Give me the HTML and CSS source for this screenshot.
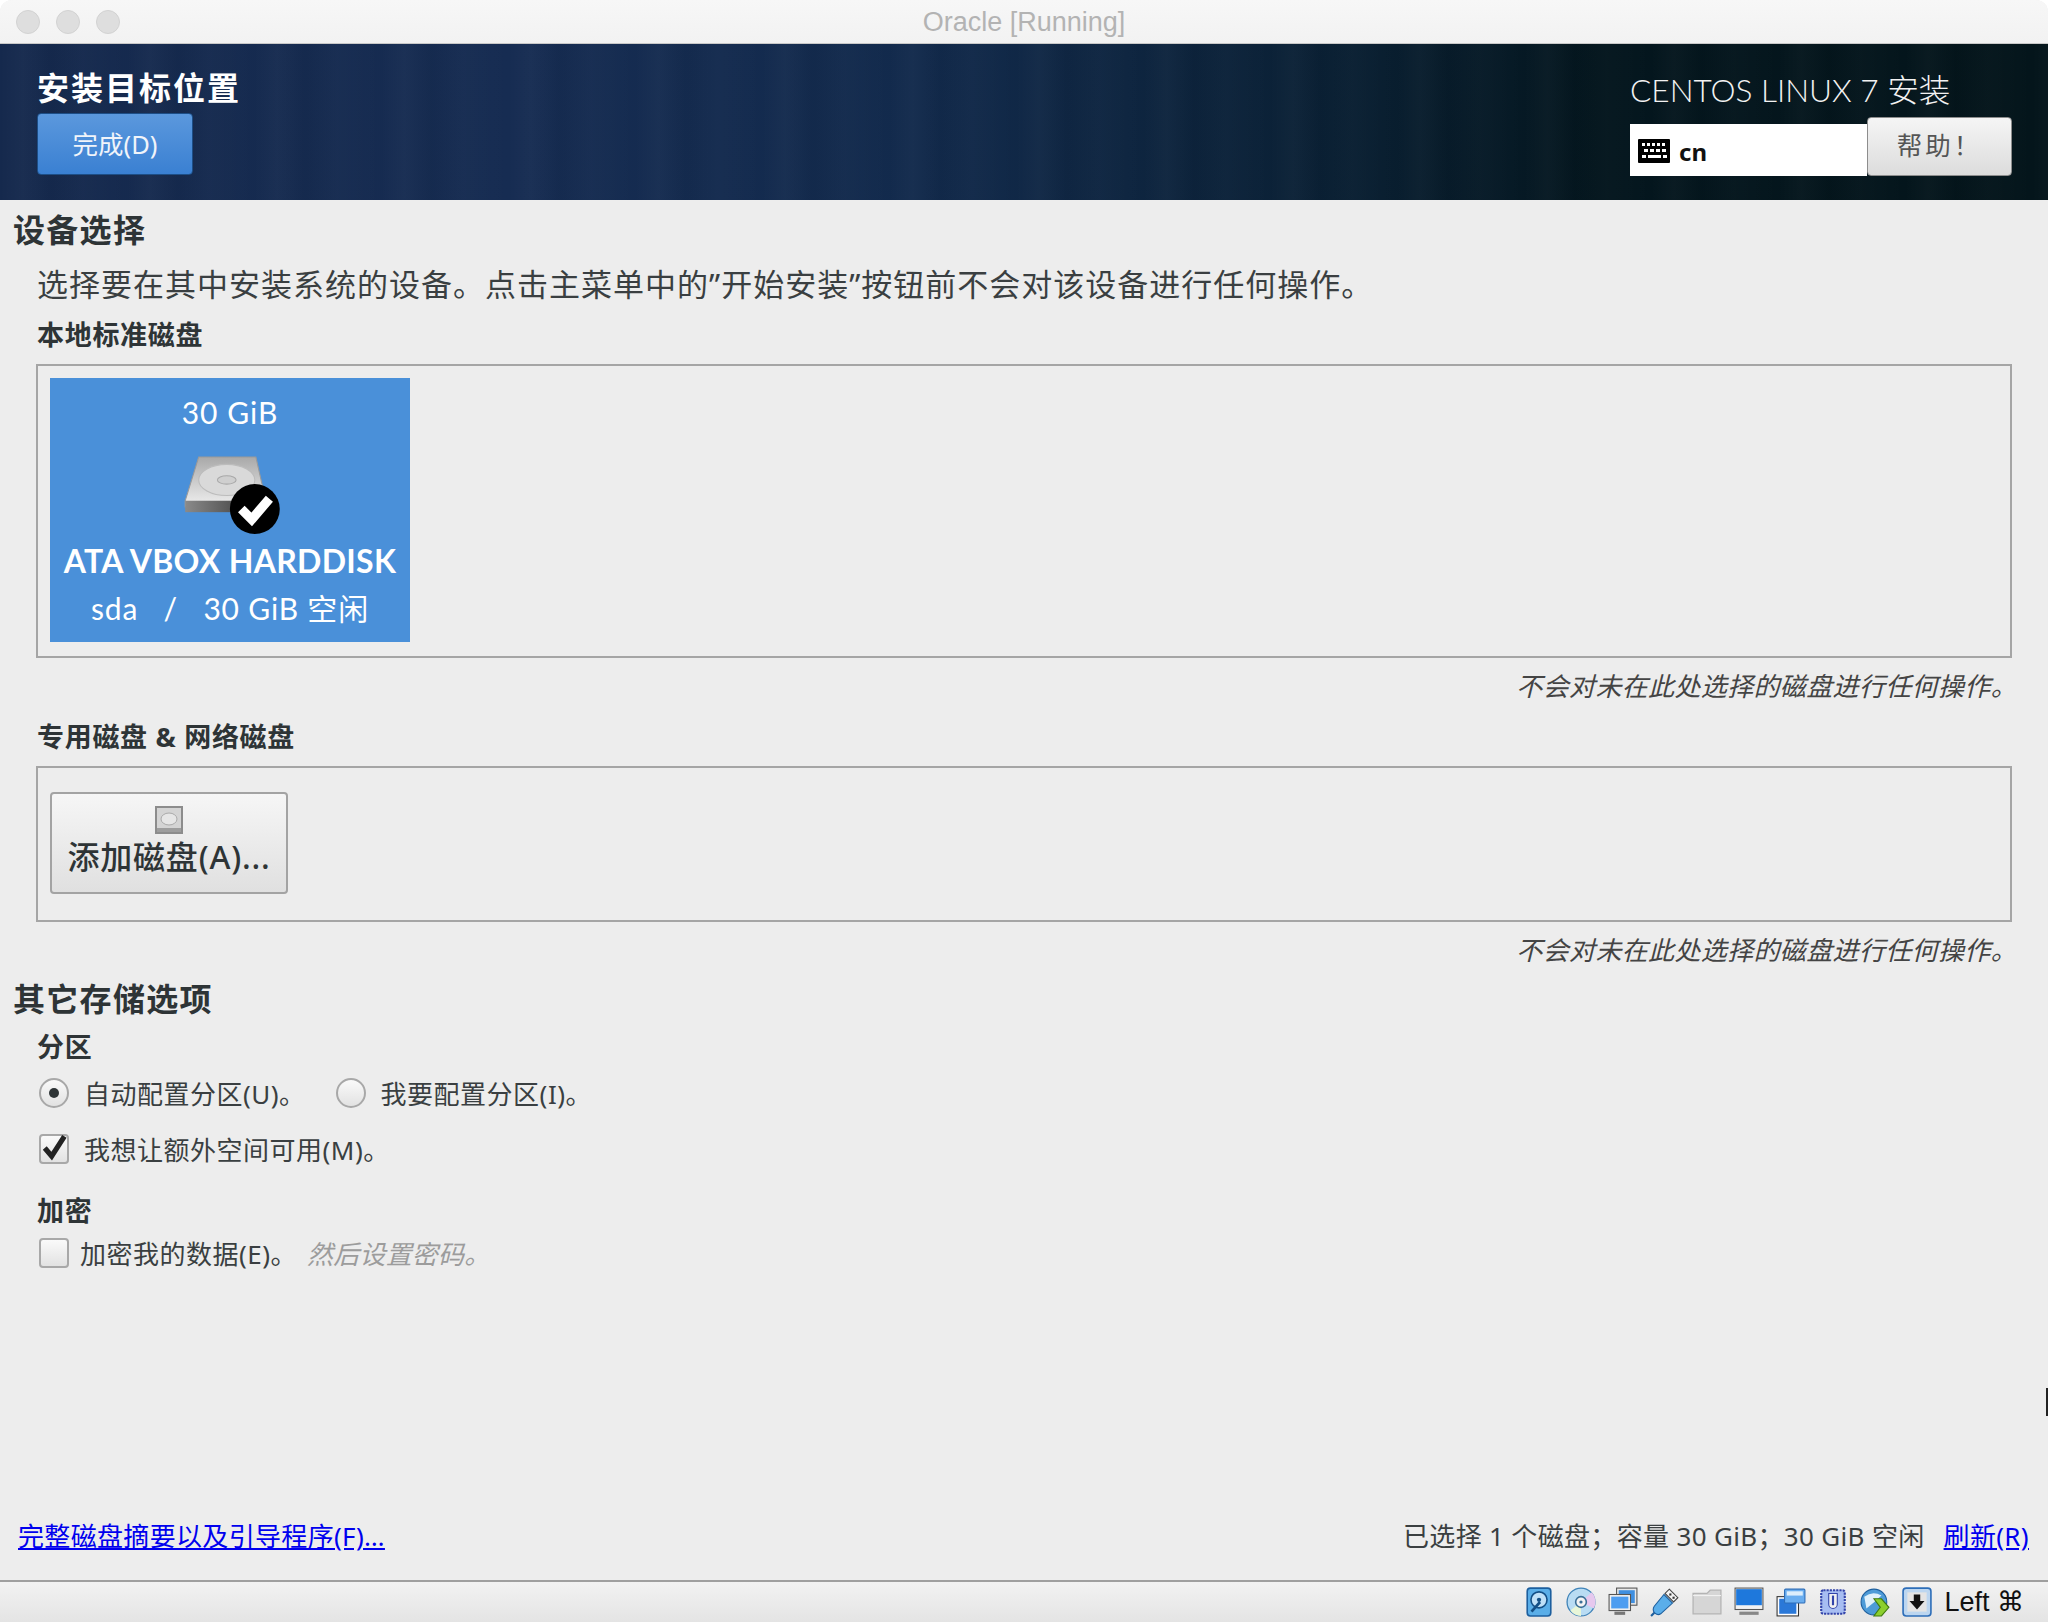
FILE: index.html
```html
<!DOCTYPE html>
<html lang="zh-CN">
<head>
<meta charset="utf-8">
<title>Oracle [Running]</title>
<link rel="stylesheet" href="styles.css">
</head>
<body>
<div class="window">
  <div class="titlebar">
    <div class="lights"><i></i><i></i><i></i></div>
    <div class="wintitle">Oracle [Running]</div>
  </div>
  <header class="banner">
    <div class="banner-left">
      <h1>安装目标位置</h1>
      <button class="done">完成(D)</button>
    </div>
    <div class="banner-right">
      <div class="product">CENTOS LINUX 7 安装</div>
      <div class="kb-row">
        <div class="kb">
          <svg class="kb-icon" viewBox="0 0 32 24"><rect width="32" height="24" rx="1" fill="#000"/><g fill="#fff"><rect x="4" y="4" width="3" height="3"/><rect x="9" y="4" width="3" height="3"/><rect x="14" y="4" width="3" height="3"/><rect x="19" y="4" width="3" height="3"/><rect x="24" y="4" width="3" height="3"/><rect x="6" y="10" width="4" height="3"/><rect x="12" y="10" width="4" height="3"/><rect x="18" y="10" width="4" height="3"/><rect x="24" y="10" width="4" height="3"/><rect x="4" y="16" width="4" height="3"/><rect x="10" y="16" width="13" height="3"/><rect x="25" y="16" width="4" height="3"/></g></svg>
          <span>cn</span>
        </div>
        <button class="help">帮助！</button>
      </div>
    </div>
  </header>
  <main class="content">
    <h2 class="sec first">设备选择</h2>
    <p class="desc">选择要在其中安装系统的设备。点击主菜单中的”开始安装”按钮前不会对该设备进行任何操作。</p>
    <h3 class="lab lab-local">本地标准磁盘</h3>
    <div class="box box-local">
      <div class="disk">
        <div class="size">30 GiB</div>
        <svg class="hdd" viewBox="0 0 96 76">
          <defs>
            <linearGradient id="hg" x1="0" y1="0" x2="0" y2="1"><stop offset="0" stop-color="#a9a9a9"/><stop offset="1" stop-color="#f0f0f0"/></linearGradient>
            <linearGradient id="hf" x1="0" y1="0" x2="1" y2="0"><stop offset="0" stop-color="#8a8a8a"/><stop offset="1" stop-color="#2e2e2e"/></linearGradient>
          </defs>
          <path d="M15 2 H70 L80 46 V50 H2 V44 Z" fill="url(#hg)" stroke="#9a9a9a"/>
          <ellipse cx="42" cy="24" rx="27" ry="15" fill="#d9d9d9" stroke="#bcbcbc"/>
          <ellipse cx="42" cy="24" rx="9" ry="4" fill="#cfcfcf" stroke="#a8a8a8"/>
          <rect x="2" y="44" width="78" height="11" fill="url(#hf)"/>
          <circle cx="69" cy="52" r="24" fill="#000"/>
          <path d="M56 52 L66 62 L83 42" fill="none" stroke="#fff" stroke-width="9"/>
        </svg>
        <div class="model">ATA VBOX HARDDISK</div>
        <div class="free">sda &nbsp; / &nbsp; 30 GiB 空闲</div>
      </div>
    </div>
    <p class="note">不会对未在此处选择的磁盘进行任何操作。</p>
    <h3 class="lab lab-net">专用磁盘 &amp; 网络磁盘</h3>
    <div class="box box-net">
      <button class="add">
        <svg class="add-icon" viewBox="0 0 28 28"><rect x="1" y="1" width="26" height="26" fill="#d4d4d4" stroke="#8c8c8c" stroke-width="2"/><ellipse cx="14" cy="13" rx="8" ry="6" fill="#e6e6e6" stroke="#aaa"/><rect x="2" y="22" width="24" height="4" fill="#9d9d9d"/></svg>
        <span>添加磁盘(A)...</span>
      </button>
    </div>
    <p class="note note2">不会对未在此处选择的磁盘进行任何操作。</p>
    <h2 class="sec sec-other">其它存储选项</h2>
    <h3 class="lab lab-part">分区</h3>
    <div class="row row-radio">
      <label class="opt"><span class="radio on"></span>自动配置分区(U)。</label>
      <label class="opt"><span class="radio"></span>我要配置分区(I)。</label>
    </div>
    <div class="row row-check">
      <label class="opt"><span class="check"><svg viewBox="0 0 26 26"><path d="M5 13 L11 20 L22 3" fill="none" stroke="#222" stroke-width="4.5"/></svg></span>我想让额外空间可用(M)。</label>
    </div>
    <h3 class="lab lab-enc">加密</h3>
    <div class="row row-enc">
      <label class="opt opt-tight"><span class="check"></span>加密我的数据(E)。</label>
      <em class="hint">然后设置密码。</em>
    </div>
    <div class="summary">
      <a href="#" class="link">完整磁盘摘要以及引导程序(F)…</a>
      <div class="stat">已选择 1 个磁盘；容量 30 GiB；30 GiB 空闲<a href="#" class="link refresh">刷新(R)</a></div>
    </div>
  </main>
  <footer class="status">
    <svg class="si" viewBox="0 0 28 28"><rect x="3" y="1" width="22" height="26" rx="3" fill="#5aaee8" stroke="#1d5f9e" stroke-width="1.5"/><circle cx="14" cy="12" r="7.5" fill="#bfe0f7" stroke="#134f86" stroke-width="1.5"/><circle cx="14" cy="12" r="2" fill="#134f86"/><path d="M7 23 L15 14" stroke="#134f86" stroke-width="2.5"/></svg>
    <svg class="si" viewBox="0 0 28 28"><circle cx="14" cy="14" r="13" fill="#b9dcf3" stroke="#3f83b8" stroke-width="1.2"/><path d="M14 14 L24 5 A13 13 0 0 1 26 20 Z" fill="#e6c8ee"/><path d="M14 14 L4 22 A13 13 0 0 0 14 27 Z" fill="#e8f6d8"/><circle cx="14" cy="14" r="5" fill="#f4f4f4" stroke="#3b6f97" stroke-width="1.5"/><circle cx="14" cy="14" r="1.5" fill="#3b6f97"/></svg>
    <svg class="si" viewBox="0 0 28 28"><rect x="8" y="1" width="19" height="16" fill="#e8e8e8" stroke="#555"/><rect x="10" y="3" width="15" height="12" fill="#3f8fe0"/><rect x="1" y="7" width="20" height="15" fill="#f0f0f0" stroke="#555"/><rect x="3" y="9" width="16" height="11" fill="#4d9df0"/><rect x="6" y="23" width="10" height="3" fill="#777"/></svg>
    <svg class="si" viewBox="0 0 28 28"><path d="M18 2 L26 10 L22 14 L14 6 Z" fill="#f4f4f4" stroke="#444"/><path d="M13 7 L21 15 L10 25 Q7 27 4 24 Q2 21 4 18 Z" fill="#5aaeea" stroke="#1d5f9e"/><path d="M4 24 L1 27" stroke="#1d5f9e" stroke-width="2"/><rect x="18" y="6" width="2" height="2" fill="#333"/><rect x="21" y="9" width="2" height="2" fill="#333"/></svg>
    <svg class="si" viewBox="0 0 28 28"><path d="M1 25 V6 H14 L17 3 H27 V25 Z" fill="#d6d6d6" stroke="#b4b4b4" stroke-width="1.2"/><path d="M1 8 H27" stroke="#f2f2f2"/></svg>
    <svg class="si" viewBox="0 0 28 28"><rect x="1" y="1" width="26" height="20" fill="#f2f2f2" stroke="#555"/><rect x="2" y="2" width="24" height="15" fill="#1e78dc"/><rect x="5" y="23" width="18" height="3" fill="#888"/></svg>
    <svg class="si" viewBox="0 0 28 28"><rect x="1" y="9" width="20" height="18" fill="#fff" stroke="#333"/><rect x="3" y="11" width="16" height="14" fill="#2a78d8"/><rect x="8" y="2" width="19" height="13" rx="1" fill="#6aaef0" stroke="#2c6db8"/><rect x="10" y="4" width="15" height="4" fill="#dceefc"/></svg>
    <svg class="si" viewBox="0 0 28 28"><rect x="3" y="3" width="22" height="22" rx="2" fill="#a7bdf2" stroke="#3344aa" stroke-width="2" stroke-dasharray="2 1"/><path d="M10 6 H18 V16 A4 4 0 0 1 10 16 Z" fill="#f0f0f0" stroke="#3344aa"/><rect x="13" y="8" width="2" height="9" fill="#3344aa"/></svg>
    <svg class="si" viewBox="0 0 28 28"><circle cx="13" cy="14" r="12" fill="#4d9bd8" stroke="#1d5f9e"/><path d="M4 9 Q12 3 20 8 Q14 14 6 20 Z" fill="#dff0fb"/><path d="M13 11 L20 11 L27 19 L20 27 L13 27 L19 19 Z" fill="#8ccf2e" stroke="#3f7a10"/></svg>
    <svg class="si" viewBox="0 0 28 28"><rect x="1" y="1" width="26" height="26" rx="3" fill="#bcd6f0" stroke="#2c6db8" stroke-width="1.5"/><rect x="5" y="5" width="18" height="18" fill="#e4e4e4"/><path d="M11 7 H17 V13 H21 L14 21 L7 13 H11 Z" fill="#111"/></svg>
    <span class="hostkey">Left ⌘</span>
  </footer>
  <div class="cursor"></div>
</div>
</body>
</html>
```
FILE: styles.css
```css
* { box-sizing: border-box; }
html, body { margin: 0; padding: 0; }
body { width: 2048px; height: 1622px; background: #fff; overflow: hidden; font-family: "Noto Sans", "Noto Sans CJK SC", sans-serif; color: #2e3436; }
.window { position: relative; width: 2048px; height: 1622px; display: flex; flex-direction: column; background: #ededed; border-radius: 12px 12px 0 0; overflow: hidden; }
h1, h2, h3, p { margin: 0; }
button { font-family: inherit; padding: 0; }

.titlebar { position: relative; flex: 0 0 44px; display: flex; align-items: center; justify-content: center; background: linear-gradient(#f7f7f7, #f2f2f2); border-bottom: 1px solid #c8c8c8; }
.lights { position: absolute; left: 16px; top: 10px; display: flex; gap: 16px; }
.lights i { width: 24px; height: 24px; border-radius: 50%; background: #dedede; border: 1px solid #d2d2d2; }
.wintitle { font-family: "Liberation Sans", sans-serif; font-size: 27px; color: #b3b3b3; padding-top: 2px; }

.banner { flex: 0 0 156px; display: flex; justify-content: space-between; color: #fff;
  background:
    repeating-linear-gradient(90deg, rgba(255,255,255,0) 0, rgba(255,255,255,.025) 23px, rgba(0,0,0,.03) 51px, rgba(255,255,255,.015) 83px, rgba(255,255,255,0) 127px),
    linear-gradient(90deg, #15294d 0, #162c52 25%, #122a4c 45%, #0a2034 65%, #04161e 78%, #04151b 100%); }
.banner-left { padding: 24px 0 0 37px; }
h1 { font-size: 32px; line-height: 40px; font-weight: 700; letter-spacing: 2px; }
.done { display: block; width: 156px; height: 62px; margin-top: 5px; padding-bottom: 3px; font-size: 25.5px; color: #f0f4fa; border: 1px solid #1d4e86; border-radius: 4px; background: linear-gradient(#5b98dd, #3a80d2); }
.banner-right { width: 382px; margin-right: 36px; padding-top: 25px; }
.product { font-family: "Lato", "Noto Sans CJK SC", sans-serif; font-weight: 300; font-size: 31.6px; line-height: 42px; color: #f2f2f2; white-space: nowrap; }
.kb-row { display: flex; align-items: flex-end; margin-top: 6px; height: 59px; }
.kb { flex: 1; height: 52px; background: #fff; color: #111; display: flex; align-items: center; padding: 2px 0 0 8px; gap: 9px; font-weight: 700; font-size: 24px; }
.kb-icon { width: 32px; height: 24px; }
.help { flex: 0 0 145px; height: 59px; padding-bottom: 6px; font-family: "Noto Sans CJK TC", sans-serif; font-size: 25.5px; letter-spacing: 3px; color: #555; border: 1px solid #8d8d8d; border-radius: 4px; background: linear-gradient(#f5f5f5, #dcdcdc); }

.content { flex: 1; display: flex; flex-direction: column; padding: 0 13px; min-height: 0; }
.sec { font-size: 32px; line-height: 44px; font-weight: 700; color: #2e3436; letter-spacing: 1.3px; }
.sec.first { margin-top: 8px; }
.desc { font-size: 31px; line-height: 40px; margin: 12px 0 0 24px; color: #3a3f41; letter-spacing: 1px; white-space: nowrap; }
.lab { font-size: 27px; line-height: 34px; font-weight: 700; margin-left: 24px; color: #2e3436; letter-spacing: .7px; }
.lab-local { margin-top: 14px; }
.box { margin: 0 23px 0 23px; border: 2px solid #a5a5a5; }
.box-local { height: 294px; margin-top: 12px; padding: 12px; }
.disk { width: 360px; height: 264px; background: #4a90d9; color: #fff; text-align: center; display: flex; flex-direction: column; align-items: center; }
.size { font-size: 30px; line-height: 36px; margin-top: 16px; font-weight: 400; font-family: "Lato", sans-serif; letter-spacing: 1px; }
.hdd { width: 100px; height: 79px; margin: 25px 0 0 5px; flex: none; }
.model { font-family: "Lato", sans-serif; font-size: 32px; line-height: 38px; font-weight: 700; margin-top: 8px; white-space: nowrap; letter-spacing: .3px; }
.free { font-family: "Lato", "Noto Sans CJK SC", sans-serif; font-size: 30px; line-height: 38px; margin-top: 9px; font-weight: 400; white-space: nowrap; letter-spacing: .8px; }
.note { text-align: right; font-style: italic; font-size: 26px; letter-spacing: .35px; line-height: 34px; margin: 11px 18px 0 0; color: #444; }
.lab-net { margin-top: 17px; }
.box-net { height: 156px; margin-top: 12px; padding: 24px 12px; }
.add { width: 238px; height: 102px; display: flex; flex-direction: column; align-items: center; padding-top: 12px; border: 2px solid #a3a3a3; border-radius: 4px; background: linear-gradient(#f6f6f6, #e0e0e0); color: #2e3436; font-size: 32px; font-weight: 500; letter-spacing: .8px; line-height: 42px; white-space: nowrap; }
.add-icon { width: 28px; height: 28px; margin-bottom: 2px; flex: none; }
.note2 { margin-top: 11px; }
.sec-other { margin-top: 10px; }
.lab-part { margin-top: 9px; }
.row { display: flex; align-items: center; margin-left: 26px; color: #3a3f41; }
.opt { display: flex; align-items: center; white-space: nowrap; font-size: 26px; letter-spacing: .5px; }
.row-radio { margin-top: 11px; height: 36px; gap: 30px; }
.radio { width: 30px; height: 30px; border-radius: 50%; border: 2px solid #a8a8a8; background: linear-gradient(#fafafa, #e2e2e2) padding-box; margin: 0 15px 0 0; position: relative; flex: none; }
.radio.on::after { content: ""; position: absolute; left: 8px; top: 8px; width: 10px; height: 10px; border-radius: 50%; background: #2e3436; }
.row-check { margin-top: 20px; height: 36px; }
.check { width: 30px; height: 30px; border: 2px solid #a8a8a8; border-radius: 4px; background: linear-gradient(#fafafa, #e2e2e2); margin-right: 15px; flex: none; display: block; }
.check svg { display: block; width: 30px; height: 30px; margin: -3px 0 0 -2px; }
.lab-enc { margin-top: 27px; }
.row-enc { margin-top: 7px; height: 36px; }
.opt-tight .check { margin-right: 11px; }
.hint { margin-left: 10px; color: #9c9c9c; font-size: 26px; letter-spacing: .2px; }
.summary { margin-top: auto; margin-bottom: 26px; display: flex; justify-content: space-between; align-items: center; font-size: 26px; letter-spacing: .33px; margin-left: 5px; margin-right: 6px; white-space: nowrap; }
.link { color: #0000ee; text-decoration: underline; }
.stat { color: #3a3f41; }
.refresh { margin-left: 19px; }

.status { flex: 0 0 42px; display: flex; align-items: center; justify-content: flex-end; gap: 12px; padding-right: 24px; border-top: 2px solid #9f9f9f; background: linear-gradient(#f2f2f2, #e4e4e4); }
.si { width: 30px; height: 30px; flex: none; }
.hostkey { font-family: "Liberation Sans", "DejaVu Sans", sans-serif; font-size: 27px; color: #111; white-space: nowrap; }
.cursor { position: absolute; right: 0; top: 1388px; width: 2px; height: 28px; background: #222; }
```
